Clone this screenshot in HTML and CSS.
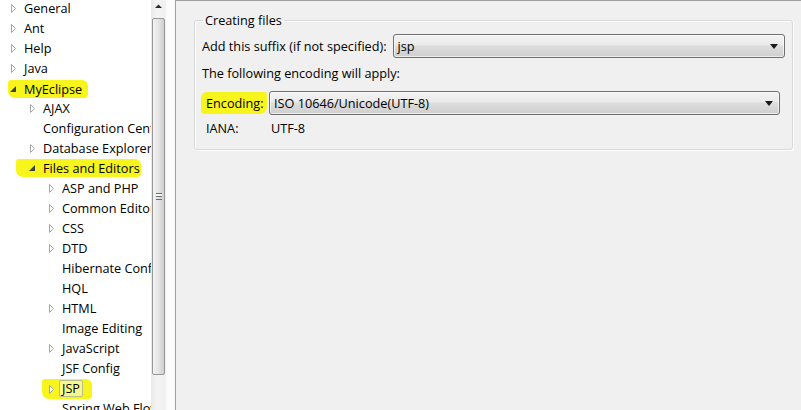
FILE: index.html
```html
<!DOCTYPE html>
<html>
<head>
<meta charset="utf-8">
<link rel="stylesheet" href="styles.css">
</head>
<body>
<div class="window">
  <div class="tree-pane">
    <ul class="tree">
      <li class="row l0"><span class="tw"><svg viewBox="0 0 16 16"><polygon class="col" points="3.5,4.5 7.5,8.5 3.5,12.5"/></svg></span><span class="lbl">General</span></li>
      <li class="row l0"><span class="tw"><svg viewBox="0 0 16 16"><polygon class="col" points="3.5,4.5 7.5,8.5 3.5,12.5"/></svg></span><span class="lbl">Ant</span></li>
      <li class="row l0"><span class="tw"><svg viewBox="0 0 16 16"><polygon class="col" points="3.5,4.5 7.5,8.5 3.5,12.5"/></svg></span><span class="lbl">Help</span></li>
      <li class="row l0"><span class="tw"><svg viewBox="0 0 16 16"><polygon class="col" points="3.5,4.5 7.5,8.5 3.5,12.5"/></svg></span><span class="lbl">Java</span></li>
      <li class="row l0"><span class="hl hl-my"><span class="tw"><svg viewBox="0 0 16 16"><polygon class="exp" points="8,5 8,11 2,11"/></svg></span><span class="lbl">MyEclipse</span></span></li>
      <li class="row l1"><span class="tw"><svg viewBox="0 0 16 16"><polygon class="col" points="3.5,4.5 7.5,8.5 3.5,12.5"/></svg></span><span class="lbl">AJAX</span></li>
      <li class="row l1"><span class="tw"></span><span class="lbl">Configuration Center</span></li>
      <li class="row l1"><span class="tw"><svg viewBox="0 0 16 16"><polygon class="col" points="3.5,4.5 7.5,8.5 3.5,12.5"/></svg></span><span class="lbl">Database Explorer</span></li>
      <li class="row l1"><span class="hl hl-fe"><span class="tw"><svg viewBox="0 0 16 16"><polygon class="exp" points="8,5 8,11 2,11"/></svg></span><span class="lbl">Files and Editors</span></span></li>
      <li class="row l2"><span class="tw"><svg viewBox="0 0 16 16"><polygon class="col" points="3.5,4.5 7.5,8.5 3.5,12.5"/></svg></span><span class="lbl">ASP and PHP</span></li>
      <li class="row l2"><span class="tw"><svg viewBox="0 0 16 16"><polygon class="col" points="3.5,4.5 7.5,8.5 3.5,12.5"/></svg></span><span class="lbl">Common Editors</span></li>
      <li class="row l2"><span class="tw"><svg viewBox="0 0 16 16"><polygon class="col" points="3.5,4.5 7.5,8.5 3.5,12.5"/></svg></span><span class="lbl">CSS</span></li>
      <li class="row l2"><span class="tw"><svg viewBox="0 0 16 16"><polygon class="col" points="3.5,4.5 7.5,8.5 3.5,12.5"/></svg></span><span class="lbl">DTD</span></li>
      <li class="row l2"><span class="tw"></span><span class="lbl">Hibernate Config</span></li>
      <li class="row l2"><span class="tw"></span><span class="lbl">HQL</span></li>
      <li class="row l2"><span class="tw"><svg viewBox="0 0 16 16"><polygon class="col" points="3.5,4.5 7.5,8.5 3.5,12.5"/></svg></span><span class="lbl">HTML</span></li>
      <li class="row l2"><span class="tw"></span><span class="lbl">Image Editing</span></li>
      <li class="row l2"><span class="tw"><svg viewBox="0 0 16 16"><polygon class="col" points="3.5,4.5 7.5,8.5 3.5,12.5"/></svg></span><span class="lbl">JavaScript</span></li>
      <li class="row l2"><span class="tw"></span><span class="lbl">JSF Config</span></li>
      <li class="row l2"><span class="hl hl-jsp"><span class="tw"><svg viewBox="0 0 16 16"><polygon class="col" points="3.5,4.5 7.5,8.5 3.5,12.5"/></svg></span><span class="lbl sel">JSP</span></span></li>
      <li class="row l2"><span class="tw"></span><span class="lbl">Spring Web Flow</span></li>
    </ul>
  </div>
  <div class="vscroll">
    <div class="arrow-up"><svg viewBox="0 0 15 12"><polygon points="4,8 11,8 7.5,4.5"/></svg></div>
    <div class="thumb"><span class="grip"></span></div>
  </div>
  <div class="gutter"></div>
  <div class="page">
    <fieldset class="group">
      <legend>Creating files</legend>
      <div class="field-row">
        <span class="label">Add this suffix (if not specified):</span>
        <div class="combo combo-suffix"><span class="combo-text">jsp</span><span class="caret"></span></div>
      </div>
      <div class="info">The following encoding will apply:</div>
      <div class="enc-grid">
        <span class="label enc-label"><span class="hl hl-enc">Encoding:</span></span>
        <div class="combo"><span class="combo-text">ISO 10646/Unicode(UTF-8)</span><span class="caret"></span></div>
        <span class="label">IANA:</span>
        <span class="value">UTF-8</span>
      </div>
    </fieldset>
  </div>
</div>
</body>
</html>
```
FILE: styles.css
```css
html, body {
  margin: 0;
  padding: 0;
  width: 801px;
  height: 410px;
  overflow: hidden;
  background: #ffffff;
  font-family: "Open Sans", "Liberation Sans", sans-serif;
  font-size: 12.7px;
  color: #000000;
}

.window {
  display: flex;
  width: 801px;
  height: 410px;
}

/* ---------- tree ---------- */
.tree-pane {
  width: 151px;
  flex: none;
  overflow: hidden;
  background: #ffffff;
}

.tree {
  list-style: none;
  margin: -2px 0 0 0;
  padding: 0;
}

.row {
  display: flex;
  align-items: center;
  height: 20px;
  white-space: nowrap;
}

.row.l0 { padding-left: 8px; }
.row.l1 { padding-left: 27px; }
.row.l2 { padding-left: 46px; }

.tw {
  display: inline-flex;
  width: 16px;
  height: 16px;
  flex: none;
}

.tw svg {
  width: 16px;
  height: 16px;
}

.col {
  fill: #ffffff;
  stroke: #a6a6a6;
  stroke-width: 1;
}

.exp {
  fill: #404040;
}

.lbl {
  line-height: 16px;
}

.hl {
  display: inline-flex;
  align-items: center;
  background: #f7f51c;
  border-radius: 3px 6px 4px 7px;
}

.hl-my {
  height: 18px;
  padding-right: 6px;
  margin-top: 1px;
}

.hl-fe {
  height: 18px;
  padding-left: 11px;
  margin-left: -11px;
  padding-right: 1px;
}

.hl-jsp {
  height: 20px;
  padding-left: 4px;
  margin-left: -4px;
  padding-right: 9px;
  margin-top: 1px;
}

.sel {
  border: 1px solid #b7c08a;
  border-radius: 2px;
  background: #f9f78a;
  padding: 0 2px;
  margin-left: -3px;
  line-height: 15px;
}

/* ---------- scrollbar ---------- */
.vscroll {
  width: 15px;
  flex: none;
  background: linear-gradient(to right, #e9e9e9, #f4f4f4 40%, #f0f0f0);
  display: flex;
  flex-direction: column;
  align-items: center;
}

.arrow-up {
  width: 15px;
  height: 18px;
  display: flex;
  justify-content: center;
}

.arrow-up svg {
  width: 15px;
  height: 12px;
  fill: #2a2a2a;
}

.thumb {
  width: 11px;
  height: 355px;
  border: 1px solid #979797;
  border-radius: 2px;
  background: linear-gradient(to right, #f2f2f2, #e4e4e4 50%, #cfcfcf);
  display: flex;
  align-items: center;
  justify-content: center;
}

.grip {
  width: 6px;
  height: 5px;
  border-top: 1px solid #6a6a6a;
  border-bottom: 1px solid #6a6a6a;
  background: linear-gradient(#ffffff 0 2px, #6a6a6a 2px 3px, transparent 3px);
}

.gutter {
  width: 9px;
  flex: none;
  background: #fbfbfb;
}

/* ---------- page ---------- */
.page {
  flex: 1;
  background: #f0f0f0;
  border-left: 1px solid #a0a0a0;
  border-top: 1px solid #a0a0a0;
}

.group {
  margin: 11px 8px 0 18px;
  padding: 6px 7px 13px 7px;
  border: 1px solid #d9d9d9;
  border-radius: 3px;
  box-shadow: inset 1px 1px 0 #ffffff, 1px 1px 0 #ffffff;
}

.group legend {
  padding: 0 2px;
  margin-left: 1px;
  line-height: 16px;
}

.field-row {
  display: flex;
  align-items: center;
  height: 24px;
}

.field-row .label {
  margin-right: 6px;
}

.combo {
  position: relative;
  display: flex;
  align-items: center;
  height: 22px;
  border: 1px solid #707070;
  border-radius: 3px;
  background: linear-gradient(#f2f2f2, #ebebeb 45%, #dddddd 50%, #cfcfcf);
  box-shadow: inset 0 0 0 1px rgba(255,255,255,0.6);
}

.combo-suffix {
  flex: 1;
}

.combo-text {
  flex: 1;
  padding-left: 4px;
}

.caret {
  width: 0;
  height: 0;
  border-left: 4px solid transparent;
  border-right: 4px solid transparent;
  border-top: 5px solid #1a1a1a;
  margin-right: 6px;
}

.info {
  line-height: 16px;
  margin-top: 7px;
}

.enc-grid {
  display: grid;
  grid-template-columns: 63px 1fr;
  grid-template-rows: 24px 16px;
  row-gap: 5px;
  align-items: center;
  margin-top: 10px;
  padding-left: 4px;
  padding-right: 5px;
}

.hl-enc {
  padding: 2px 3px 2px 5px;
  margin-left: -5px;
  border-radius: 6px 3px 7px 4px;
}

.value {
  padding-left: 2px;
}
```
